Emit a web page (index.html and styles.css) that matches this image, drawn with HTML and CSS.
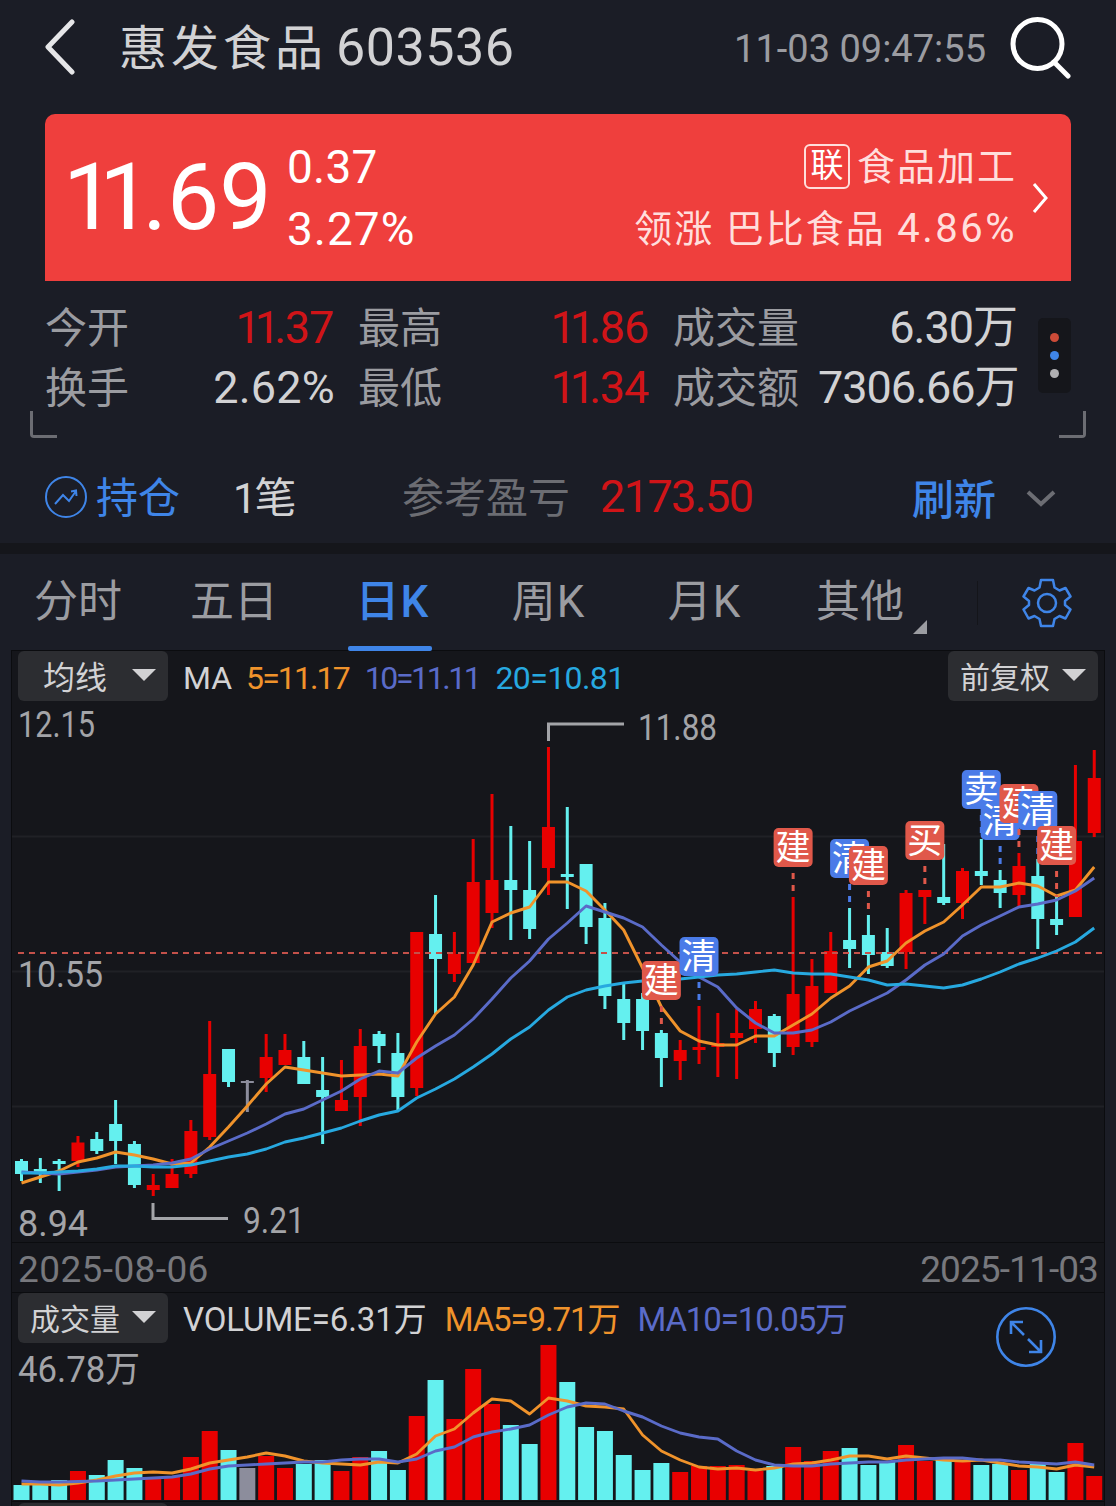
FILE: index.html
```html
<!DOCTYPE html>
<html lang="zh-CN">
<head>
  <meta charset="UTF-8">
  <meta name="viewport" content="width=device-width, initial-scale=1.0">
  <title>惠发食品 603536</title>
  <link rel="stylesheet" href="styles.css">
</head>
<body>
  <div class="header">
    <svg class="back" width="32" height="56" viewBox="0 0 32 56"><path d="M28 3 L4 28 L28 53"/></svg>
    <div class="title">惠发食品<span class="code">603536</span></div>
    <div class="time">11-03 09:47:55</div>
    <svg class="search" width="62" height="64" viewBox="0 0 62 64"><circle cx="28.500" cy="29" r="24.500"/><path d="M45 47 L59 61"/></svg>
  </div>

  <div class="quote">
    <div class="price"><span class="one">1</span><span class="one last">1</span>.69</div>
    <div class="change">
      <div class="diff">0.37</div>
      <div>3.27%</div>
    </div>
    <div class="sector">
      <div class="sector-name"><span class="tag">联</span>食品加工</div>
      <div class="leader">领涨 巴比食品 <span class="leader-num">4.86%</span></div>
    </div>
    <svg class="more" width="18" height="32" viewBox="0 0 18 32"><path d="M3 2 L15 16 L3 30"/></svg>
  </div>

  <div class="stats">
    <div class="grid">
      <div class="label first">今开</div><div class="value red"><span class="ones">11</span>.37</div>
      <div class="label">最高</div><div class="value red"><span class="ones">11</span>.86</div>
      <div class="label">成交量</div><div class="value">6.30万</div>
      <div class="label first">换手</div><div class="value pct">2.62%</div>
      <div class="label">最低</div><div class="value red"><span class="ones">11</span>.34</div>
      <div class="label">成交额</div><div class="value">7306.66万</div>
    </div>
    <div class="pill"><span class="dot-red"></span><span class="dot-blue"></span><span class="dot-grey"></span></div>
    <div class="corner left"></div>
    <div class="corner right"></div>
  </div>

  <div class="position">
    <svg class="trend" width="42" height="42" viewBox="0 0 42 42"><circle cx="21" cy="21" r="20"/><path d="M10 28 L18 19 L24 25 L31 15 M26 15.500 L31 14.500 L31.500 20"/></svg>
    <div class="hold">持仓</div>
    <div class="count">1笔</div>
    <div class="profit-label">参考盈亏</div>
    <div class="profit">2173.50</div>
    <div class="refresh">刷新</div>
    <svg class="down" width="32" height="20" viewBox="0 0 32 20"><path d="M3 3 L16 15 L29 3"/></svg>
  </div>

  <div class="tabs">
    <div class="tab">分时</div>
    <div class="tab">五日</div>
    <div class="tab k active">日K</div>
    <div class="tab k">周K</div>
    <div class="tab k">月K</div>
    <div class="tab other">其他</div>
    <div class="settings">
      <svg width="50" height="50" viewBox="0 0 50 50">
        <path d="M19 2 H31 L32.500 9.500 L37.500 12.500 L43.500 10 L48.500 18.500 L43 23 V27 L48.500 31.500 L43.500 40.500 L37.500 38 L32.500 41 L31 48 H19 L17.500 41 L12.500 38 L6.500 40.500 L1.500 31.500 L7 27 V23 L1.500 18.500 L6.500 10 L12.500 12.500 L17.500 9.500 Z"/>
        <circle cx="25" cy="25" r="9"/>
      </svg>
    </div>
  </div>

  <div class="chart">
    <div class="toolbar">
      <div class="select wide-pad">均线<i></i></div>
      <div class="ma"><span class="white">MA</span><span class="orange m5">5=11.17</span><span class="purple m10">10=11.11</span><span class="blue m20">20=10.81</span></div>
      <div class="select last-select">前复权<i></i></div>
    </div>
    <svg id="kline" width="1092" height="540" viewBox="12 702 1092 540"></svg>
    <div class="dates"><span>2025-08-06</span><span class="to">2025-11-03</span></div>
    <div class="toolbar">
      <div class="select">成交量<i></i></div>
      <div class="ma vol"><span class="white">VOLUME=6.31万</span><span class="orange">MA5=9.71万</span><span class="purple">MA10=10.05万</span></div>
      <svg class="expand" width="60" height="60" viewBox="0 0 60 60"><circle cx="30" cy="30" r="28.700"/><path d="M28 28 L15 15 M15 27 V15 H27 M32 32 L45 45 M45 33 V45 H33"/></svg>
    </div>
    <svg id="volume" width="1092" height="157" viewBox="12 1344 1092 157"></svg>
    <div class="next"><div class="select"></div></div>
  </div>
  <script src="chart.js"></script>
</body>
</html>
```
FILE: styles.css
```css
body {
  margin: 0;
  height: 1506px;
  overflow: hidden;
  background: #1b1d26;
  color: #d2d2d4;
  font-family: Roboto, "Noto Sans CJK SC", sans-serif;
  font-weight: 400;
  white-space: nowrap;
}
svg {
  display: block;
  fill: none;
  flex-shrink: 0;
}
.header {
  display: flex;
  align-items: center;
  height: 94px;
  padding: 0 45px 20px 44px;
}
.back {
  stroke: #e6e6e8;
  stroke-width: 5;
  stroke-linecap: round;
  stroke-linejoin: round;
}
.title {
  margin: -6px 0 0 43px;
  font-size: 48px;
  letter-spacing: 4px;
}
.code {
  margin-left: 9px;
  font-size: 52px;
  letter-spacing: 0.5px;
}
.time {
  margin-left: auto;
  margin-right: 23px;
  padding-top: 3px;
  font-size: 38px;
  color: #9b9ca1;
}
.search {
  stroke: #fff;
  stroke-width: 5;
  stroke-linecap: round;
}
.quote {
  display: flex;
  align-items: center;
  height: 167px;
  margin: 0 45px;
  box-sizing: border-box;
  padding: 0 22px 0 18px;
  border-radius: 10px 10px 0 0;
  background: #ef3f3d;
  color: #fff;
}
.price {
  width: 224px;
  font-size: 93px;
}
.one {
  letter-spacing: -16px;
}
.one.last {
  letter-spacing: -9px;
}
.change {
  font-size: 46px;
  line-height: 62px;
  letter-spacing: 1px;
}
.diff {
  letter-spacing: 0.2px;
}
.sector {
  margin-left: auto;
  margin-right: 14px;
  text-align: right;
  font-size: 38px;
  line-height: 62px;
  letter-spacing: 2px;
  color: #ffdedc;
}
.sector-name {
  display: flex;
  align-items: center;
  justify-content: flex-end;
}
.leader-num {
  font-size: 40px;
  letter-spacing: 2.5px;
}
.tag {
  width: 42px;
  height: 41px;
  margin-right: 7px;
  border: 2px solid #ffdedc;
  border-radius: 6px;
  font-size: 33px;
  line-height: 39px;
  letter-spacing: 0;
  text-align: center;
  color: #fff;
}
.more {
  stroke: #fff;
  stroke-width: 3;
}
.stats {
  position: relative;
  display: flex;
  height: 153px;
  padding: 16px 45px 0;
}
.grid {
  display: grid;
  grid-template-columns: 105px 183px 131px 184px 170px 199px;
  grid-template-rows: 60px 60px;
  width: 972px;
  padding-top: 1px;
  font-size: 42px;
  line-height: 60px;
}
.label {
  padding: 1px 0 0 25px;
  color: #9b9ca1;
}
.label.first {
  padding-left: 0;
}
.value {
  text-align: right;
  font-size: 45px;
  letter-spacing: -1px;
}
.pct {
  margin-right: -2px;
  letter-spacing: 0.2px;
}
.ones {
  letter-spacing: -6px;
}
.red {
  letter-spacing: -1.2px;
  color: #d01418;
}
.pill {
  display: flex;
  flex-direction: column;
  align-items: center;
  justify-content: center;
  gap: 9px;
  width: 33px;
  height: 75px;
  margin: 21px 0 0 21px;
  border-radius: 5px;
  background: #15161b;
}
.pill span {
  width: 9px;
  height: 9px;
  border-radius: 50%;
}
.dot-red { background: #cc4b38; }
.dot-blue { background: #3f85e8; }
.dot-grey { background: #b0b0b3; }
.corner {
  position: absolute;
  top: 130px;
  width: 24px;
  height: 24px;
  border-bottom: 3px solid #6c6d73;
}
.left {
  left: 30px;
  border-left: 3px solid #6c6d73;
  border-radius: 0 0 0 4px;
}
.right {
  right: 30px;
  border-right: 3px solid #6c6d73;
  border-radius: 0 0 4px 0;
}
.position {
  display: flex;
  align-items: center;
  height: 93px;
  padding: 0 59px 0 45px;
  border-bottom: 11px solid #15161b;
  font-size: 42px;
}
.trend {
  stroke: #3f85e8;
  stroke-width: 2;
}
.hold {
  width: 137px;
  margin-left: 9px;
  padding-bottom: 5px;
  color: #3f85e8;
}
.count {
  width: 169px;
  padding-bottom: 5px;
  letter-spacing: -2px;
}
.profit-label {
  width: 198px;
  padding-bottom: 5px;
  color: #6c6d73;
}
.profit {
  font-size: 45px;
  letter-spacing: -1.6px;
  color: #d01418;
}
.refresh {
  margin-left: auto;
  margin-right: 29px;
  font-weight: 500;
  color: #3f85e8;
}
.down {
  margin-top: 5px;
  stroke: #6c6d73;
  stroke-width: 4;
}
.tabs {
  display: flex;
  height: 96px;
  font-size: 44px;
  line-height: 97px;
  color: #9b9ca1;
}
.tab {
  box-sizing: border-box;
  width: 156px;
  text-align: center;
}
.k {
  padding-left: 5px;
  letter-spacing: 1px;
}
.active {
  position: relative;
  font-weight: 500;
  color: #3f85e8;
}
.active::after {
  content: "";
  position: absolute;
  left: 36px;
  bottom: -1px;
  width: 84px;
  height: 5px;
  border-radius: 2px;
  background: #3f85e8;
}
.other {
  position: relative;
  padding-left: 4px;
}
.other::after {
  content: "";
  position: absolute;
  right: 9px;
  bottom: 16px;
  border-left: 14px solid transparent;
  border-bottom: 14px solid #9b9ca1;
}
.settings {
  display: flex;
  align-items: center;
  height: 44px;
  margin: 27px 0 0 41px;
  padding-left: 44px;
  border-left: 1px solid #14151a;
}
.settings svg {
  stroke: #3f85e8;
  stroke-width: 2.5;
  stroke-linejoin: round;
}
.chart {
  height: 856px;
  margin: 0 11px;
  border: 1px solid #0b0c0f;
  border-bottom: 0;
  box-sizing: border-box;
  background: #15161b;
}
.toolbar {
  position: relative;
  display: flex;
  height: 51px;
  padding: 0 6px;
}
.select {
  display: flex;
  align-items: center;
  justify-content: space-between;
  box-sizing: border-box;
  width: 150px;
  height: 50px;
  padding: 0 12px 2px;
  border-radius: 6px;
  background: #2c2d31;
  font-size: 30px;
}
.wide-pad {
  padding-left: 25px;
  font-size: 32px;
}
.select i {
  border: 12px solid transparent;
  border-top-color: #d2d2d4;
  border-bottom: 0;
}
.last-select {
  margin-left: auto;
}
.ma {
  display: flex;
  gap: 16px;
  margin-left: 15px;
  font-size: 32px;
  line-height: 54px;
}
.vol {
  gap: 18px;
  font-size: 33px;
}
.vol span {
  letter-spacing: -1.1px;
}
.vol .white {
  letter-spacing: -0.1px;
}
.m5 {
  margin-left: -2px;
  letter-spacing: -1.9px;
}
.m10 { letter-spacing: -2.4px; }
.m20 { letter-spacing: -0.6px; }
.orange { color: #f0932b; }
.purple { color: #5a6bc8; }
.blue { color: #27a9e0; }
.dates {
  display: flex;
  justify-content: space-between;
  height: 49px;
  padding: 0 6px;
  border-top: 1px solid #0b0c0f;
  border-bottom: 1px solid #0b0c0f;
  font-size: 37px;
  line-height: 53px;
  letter-spacing: 0.4px;
  color: #77787d;
}
.to {
  letter-spacing: -0.9px;
}
.expand {
  position: absolute;
  right: 48px;
  top: 14px;
  stroke: #3f85e8;
  stroke-width: 2.6;
}
.next {
  height: 5px;
  overflow: hidden;
  padding: 1px 6px 0;
  border-top: 1px solid #0b0c0f;
}
#kline {
  overflow: visible;
}
.axis {
  fill: #a3a4a8;
  font-size: 36px;
}
.tip {
  stroke: #a3a4a8;
  stroke-width: 3;
}
.gridline {
  stroke: #202126;
  stroke-width: 2;
}
.cost {
  stroke: #c4514a;
  stroke-width: 2;
  stroke-dasharray: 6 5;
}
.ma-line {
  stroke-width: 2.9;
  stroke-linejoin: round;
}
.mark {
  fill: #fff;
  font-size: 35px;
  text-anchor: middle;
}
```
FILE: chart.js
```javascript
const STEP = 18.82;
const LEFT = 21.5;
const COLORS = { r: '#e80000', c: '#64f0ef', g: '#8c8d9c' };

// color, high, body top, body bottom, low, volume top
const days = [
  ['c',1159,1161,1174,1181,1485],['c',1158,1169,1172,1183,1485],['c',1159,1161,1164,1191,1480],
  ['r',1136,1142.5,1161,1167,1471],['c',1132,1139,1151,1154,1475],['c',1100,1124,1141,1164,1460],
  ['c',1141,1144,1185,1188,1468],['r',1174,1185,1190,1196,1479],['r',1159,1174,1188,1188,1477],
  ['r',1120,1131,1174,1178,1457],['r',1021,1074,1137,1140,1431],['c',1049,1049,1082,1087,1450],
  ['g',1080,1081,1083,1112,1468],['r',1034,1057,1078,1092,1456],['r',1034,1050,1065,1065,1468],
  ['c',1041,1057,1084,1084,1464],['c',1057,1090,1097,1144,1460],['r',1060,1100,1111,1111,1471],
  ['r',1029,1046,1097,1126,1457],['c',1031,1034,1046,1063,1451],['c',1033,1053,1097,1111,1470],
  ['r',932,932,1088,1096,1416],['c',895,934,959,1014,1380],['r',932,954,974,982,1419],
  ['r',839,882,963,963,1369],['r',794,880,913,928,1404],['c',826,880,890,940,1425],
  ['c',841,890,929,939,1444],['r',747,827,868,895,1345],['c',807,874,877,909,1382],
  ['c',864,864,927,944,1427],['c',903,918,996,1009,1431],['c',984,999,1023,1040,1455],
  ['c',993,999,1031,1050,1470],['c',1030,1033,1058,1087,1463],['r',1040,1050,1061,1080,1472],
  ['r',1006,1047,1050,1064,1466],['r',1013,1043,1047,1077,1466],['r',1009,1033,1038,1079,1465],
  ['r',1001,1009,1029,1043,1471],['c',1014,1016,1053,1067,1466],['r',897,994,1047,1055,1447],
  ['r',959,986,1042,1047,1461],['r',932,951,993,993,1451],['c',908,940,949,968,1448],
  ['c',915,935,955,974,1465],['c',928,952,966,968,1462],['r',890,893,952,969,1445],
  ['r',890,890,897,924,1461],['c',844,897,903,905,1460],['r',868,871,903,919,1462],
  ['c',839,871,876,885,1465],['c',870,880,893,908,1464],['r',853,866,895,907,1470],
  ['c',859,876,919,949,1464],['c',897,919,925,935,1472],['r',765,841,917,917,1443],
  ['r',750,778,833,837,1476]
];

const ma5 = [1183,1177,1171,1162,1158,1152,1155,1159,1164,1163,1147,1127,1106,1084,1067,1070,1073,1076,1075,1074,1076,1042,1014,997,965,922,913,907,882,882,891,910,930,968,1007,1031,1041,1045,1045,1036,1036,1025,1014,998,986,967,961,943,931,922,905,887,887,883,886,896,890,867];
const ma10 = [1172,1173,1174,1172,1170,1167,1166,1165,1163,1159,1149,1141,1133,1124,1114,1109,1100,1091,1079,1071,1073,1058,1046,1035,1019,999,978,961,939,923,906,912,918,927,945,962,977,987,1008,1023,1033,1033,1030,1022,1011,1002,993,980,965,954,936,925,916,907,904,900,891,878];
const ma20 = [1173,1173,1172,1171,1169,1166,1166,1167,1167,1165,1161,1157,1154,1149,1142,1138,1133,1128,1121,1115,1111,1098,1089,1079,1067,1054,1039,1027,1010,997,990,986,983,981,980,979,977,975,974,972,970,973,974,974,977,980,985,984,986,988,985,979,972,964,958,951,942,928];
const vol5 = [1484,1484,1485,1483,1480,1476,1473,1472,1473,1469,1463,1460,1457,1453,1456,1461,1463,1464,1465,1462,1463,1454,1436,1429,1413,1399,1401,1414,1398,1401,1406,1407,1409,1435,1451,1460,1467,1469,1468,1470,1468,1464,1463,1460,1456,1456,1459,1456,1458,1460,1461,1460,1463,1466,1467,1469,1465,1467];
const vol10 = [1481,1482,1482,1481.5,1481,1480,1479,1478,1477,1474,1469,1466,1465,1464,1463,1462,1462,1460,1459,1459,1462,1459,1451,1447,1437,1432,1429,1425,1415,1407,1403,1404,1411,1417,1426,1433,1437,1439,1451,1460,1465,1466,1466,1464,1463,1462,1462,1460,1459,1458,1458,1460,1460,1462,1463,1464,1462,1465];

// day index, top of the badge, label
const marks = [
  [34,961,'建'],[36,937,'清'],[41,828,'建'],[44,839,'清'],[45,846,'建'],[48,821,'买'],
  [51,770,'卖'],[52,801,'清'],[53,784,'建'],[54,791,'清'],[55,826,'建']
];

const x = i => LEFT + i * STEP;

function line(values, color) {
  const pts = values.map((v, i) => `${x(i).toFixed(1)},${v}`).join(' ');
  return `<polyline class="ma-line" points="${pts}" stroke="${color}"/>`;
}

function label(tx, ty, text, width) {
  return `<text class="axis" x="${tx}" y="${ty}" textLength="${width}" lengthAdjust="spacingAndGlyphs">${text}</text>`;
}

function drawKline() {
  let out = '';
  [836.5, 971.5, 1106.5].forEach(y => {
    out += `<line class="gridline" x1="12" x2="1104" y1="${y}" y2="${y}"/>`;
  });
  days.forEach(([c, high, top, bottom, low], i) => {
    out += `<rect x="${x(i) - 1.5}" y="${high}" width="3" height="${low - high}" fill="${COLORS[c]}"/>`;
    out += `<rect x="${x(i) - 6.5}" y="${top}" width="13" height="${bottom - top}" fill="${COLORS[c]}"/>`;
  });
  out += '<line class="cost" x1="18" x2="1104" y1="953" y2="953"/>';
  out += line(ma5, '#f0932b') + line(ma10, '#5a6bc8') + line(ma20, '#27a9e0');
  marks.forEach(([i, top, text]) => {
    const color = text === '清' || text === '卖' ? '#4a7be8' : '#e0584a';
    const end = days[i][1];
    if (end > top + 44) {
      out += `<line x1="${x(i)}" x2="${x(i)}" y1="${top + 45}" y2="${end}" stroke="${color}" stroke-width="3" stroke-dasharray="6 6"/>`;
    }
    out += `<rect x="${x(i) - 19.5}" y="${top}" width="39" height="39" rx="5" fill="${color}"/>`;
    out += `<text class="mark" x="${x(i)}" y="${top + 32}">${text}</text>`;
  });
  out += '<path class="tip" d="M548.500 741 V724 H624"/><path class="tip" d="M153 1203 V1218.500 H228"/>';
  out += label(18, 737, '12.15', 77) + label(18, 987, '10.55', 85) + label(18, 1236, '8.94', 70);
  out += label(638, 740, '11.88', 79) + label(243, 1233, '9.21', 62);
  document.getElementById('kline').innerHTML = out;
}

function drawVolume() {
  let out = '';
  days.forEach((d, i) => {
    out += `<rect x="${x(i) - 8}" y="${d[5]}" width="16" height="${1500 - d[5]}" fill="${COLORS[d[0]]}"/>`;
  });
  out += line(vol5, '#f0932b') + line(vol10, '#5a6bc8');
  out += label(18, 1382, '46.78万', 122);
  document.getElementById('volume').innerHTML = out;
}

drawKline();
drawVolume();
```
